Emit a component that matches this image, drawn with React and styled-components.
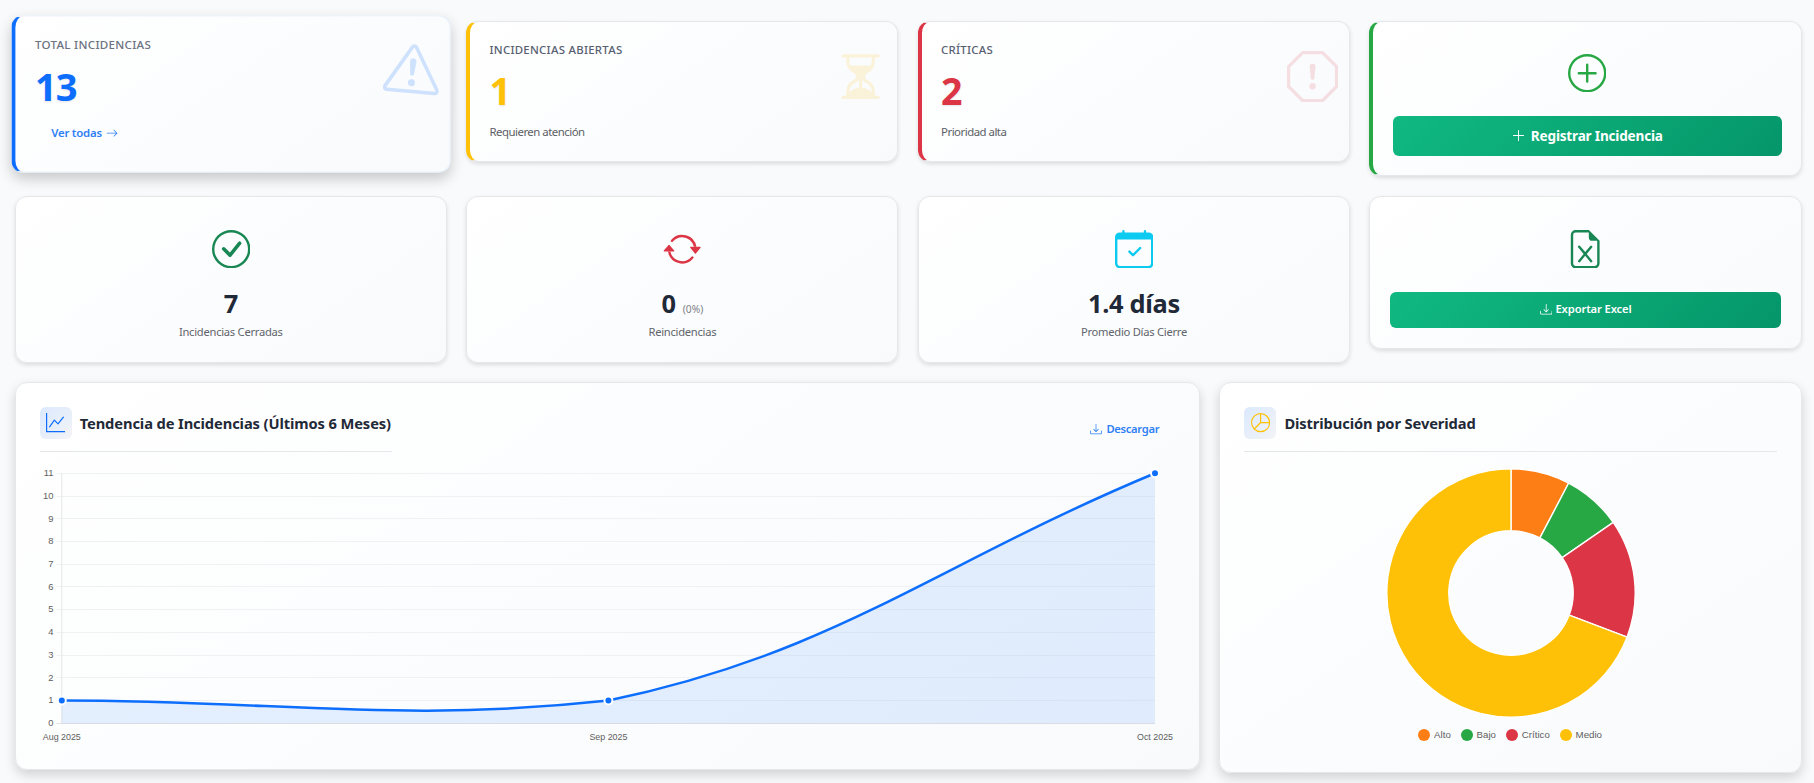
import React from "react";
import styled, { createGlobalStyle, css } from "styled-components";
import {
  BsArrowRepeat,
  BsArrowRight,
  BsCalendarCheck,
  BsCheckCircle,
  BsDownload,
  BsExclamationOctagon,
  BsExclamationTriangle,
  BsFileEarmarkExcel,
  BsGraphUp,
  BsHourglassSplit,
  BsPieChart,
  BsPlusCircle,
  BsPlusLg,
} from "react-icons/bs";

const GlobalStyle = createGlobalStyle`
  *, *::before, *::after { box-sizing: border-box; }
  body {
    margin: 0;
    min-height: 100vh;
    background: #f8fafc;
    color: #1f2937;
    font-family: "Segoe UI", "Noto Sans", sans-serif;
    overflow: hidden;
  }
  svg { display: block; flex: none; }
`;

const Dashboard = styled.main`
  display: flex;
  flex-direction: column;
  width: 1787px;
  margin: 21px 0 0 14.7px;
`;

const CardRow = styled.section`
  display: grid;
  grid-template-columns: repeat(4, 1fr);
  gap: 19.4px;
  align-items: start;
  height: ${(p) => p.$height}px;
`;

const ChartRow = styled.section`
  display: grid;
  grid-template-columns: 1185.1px 1fr;
  gap: 19.6px;
  align-items: start;
`;

const Surface = styled.article`
  border: 1px solid #e5e7eb;
  border-radius: 12px;
  background: linear-gradient(145deg, #ffffff 0%, #f8fafc 100%);
  box-shadow: 0 2px 4px rgba(0, 0, 0, 0.12);
`;

const KpiCard = styled(Surface)`
  position: relative;
  height: ${(p) => p.$height}px;
  padding: 19.2px;
  border-left: 4px solid ${(p) => p.$accent};
  ${(p) =>
    p.$raised &&
    css`
      transform: translate(0, -4.5px) scale(1.017);
      border-top-color: #e6effd;
      border-right-color: #e6effd;
      border-bottom-color: #dfe8f6;
      box-shadow: 0 6px 14px rgba(0, 0, 0, 0.2);
    `}
`;

const KpiLabel = styled.h6`
  margin: 0;
  color: ${(p) => (p.$soft ? "#6b7280" : "#566070")};
  font-size: 11.4px;
  font-weight: 500;
  line-height: 17px;
  letter-spacing: 0.28px;
  text-transform: uppercase;
`;

const KpiValue = styled.div`
  margin-top: 7px;
  color: ${(p) => p.$color};
  font-size: 37.5px;
  font-weight: 700;
  line-height: 52px;
  letter-spacing: -1px;
  text-shadow: 0 1px 2px rgba(0, 0, 0, 0.1);
`;

const KpiNote = styled.div`
  margin-top: 6px;
  color: #5b6066;
  font-size: 11.4px;
  font-weight: 400;
  line-height: 17px;
  letter-spacing: -0.5px;
`;

const TextLink = styled.a`
  display: inline-flex;
  align-items: center;
  gap: 4px;
  color: #2f80f5;
  font-size: 11.2px;
  font-weight: 600;
  line-height: 16px;
  letter-spacing: -0.2px;
`;

const KpiLink = styled(TextLink)`
  margin: 12px 0 0 16px;
`;

const KpiIcon = styled.span`
  position: absolute;
  top: ${(p) => (p.$tilted ? 26 : 29)}px;
  right: 11.4px;
  color: ${(p) => p.$color};
  opacity: ${(p) => (p.$tilted ? 0.18 : 0.14)};
  transform: ${(p) => (p.$tilted ? "rotate(5deg) scale(1.08)" : "none")};
`;

const ActionBody = styled.div`
  display: flex;
  flex-direction: column;
  align-items: center;
  gap: 24px;
  padding-top: 12.4px;
`;

const Tint = styled.span`
  color: ${(p) => p.$color};
`;

const PrimaryButton = styled.button`
  display: flex;
  align-items: center;
  justify-content: center;
  gap: ${(p) => (p.$large ? 4.5 : 3.5)}px;
  width: 100%;
  height: ${(p) => (p.$large ? 40 : 36)}px;
  padding: ${(p) => (p.$large ? 0 : "0 0 2px")};
  border: 0;
  border-radius: 6px;
  background: linear-gradient(135deg, #10b981 0%, #059669 100%);
  color: #fff;
  font-family: inherit;
  font-size: ${(p) => (p.$large ? 13.6 : 11.2)}px;
  font-weight: ${(p) => (p.$large ? 700 : 600)};
  letter-spacing: ${(p) => (p.$large ? -0.2 : -0.12)}px;
`;

const StatCard = styled(Surface)`
  display: flex;
  flex-direction: column;
  align-items: center;
  height: ${(p) => p.$height}px;
  padding: 33px 20px 20px;
`;

const StatValue = styled.div`
  display: flex;
  align-items: baseline;
  gap: 7px;
  height: 36px;
  margin-top: 17px;
  color: #1f2937;
  font-size: 25.4px;
  font-weight: 700;
  line-height: 36px;
  letter-spacing: -0.3px;
`;

const StatShare = styled.small`
  color: #7b8087;
  font-size: 10.2px;
  font-weight: 400;
  line-height: 1;
  letter-spacing: 0;
`;

const StatLabel = styled.div`
  margin-top: 2px;
  color: #5f646b;
  font-size: 11.2px;
  line-height: 18px;
  letter-spacing: -0.27px;
`;

const ExportButton = styled(PrimaryButton)`
  margin-top: 23.6px;
`;

const Panel = styled(Surface)`
  height: ${(p) => p.$height}px;
  padding: 24px;
  box-shadow: 0 5px 12px rgba(0, 0, 0, 0.16);
`;

const PanelHeader = styled.header`
  display: flex;
  align-items: flex-start;
  justify-content: space-between;
  height: 57px;
`;

const PanelTitle = styled.h5`
  display: flex;
  align-items: flex-start;
  gap: 8px;
  width: ${(p) => (p.$wide ? "100%" : "352px")};
  height: 45px;
  margin: 0;
  border-bottom: 1px solid #e5e7eb;
  font-size: 14.7px;
  font-weight: 700;
  line-height: 33px;
  letter-spacing: -0.11px;
  white-space: nowrap;
`;

const TitleIcon = styled.span`
  display: grid;
  place-items: center;
  width: 32px;
  height: 32px;
  border-radius: 6px;
  background: linear-gradient(135deg, #dbe9fe 0%, #f3f4f6 100%);
  color: ${(p) => p.$color};
`;

const DownloadLink = styled(TextLink)`
  margin: 14px 15.5px 0 0;
  letter-spacing: -0.3px;
`;

const AxisText = styled.text`
  fill: #606060;
  font-family: "Liberation Sans", Arial, sans-serif;
  font-size: ${(p) => p.$size}px;
`;

const PieWrap = styled.div`
  display: flex;
  flex-direction: column;
  align-items: center;
  gap: 10px;
  padding-top: 4px;
`;

const Legend = styled.ul`
  display: flex;
  gap: 9.8px;
  margin: 0 1px 0 0;
  padding: 0;
  list-style: none;
`;

const LegendItem = styled.li`
  display: flex;
  align-items: center;
  gap: 4px;
  color: #606060;
  font-family: "Liberation Sans", Arial, sans-serif;
  font-size: 9.7px;
  line-height: 14px;

  &::before {
    content: "";
    width: 12px;
    height: 12px;
    border-radius: 50%;
    background: ${(p) => p.$color};
  }
`;

const severities = [
  { name: "Alto", count: 1, color: "#fd7e14" },
  { name: "Bajo", count: 1, color: "#28a745" },
  { name: "Crítico", count: 2, color: "#dc3545" },
  { name: "Medio", count: 9, color: "#ffc107" },
];

const AXIS_LEFT = 21.8;
const AXIS_RIGHT = 1115;
const AXIS_BOTTOM = 259.3;
const STEP = 22.73;
const yOf = (value) => AXIS_BOTTOM - value * STEP;
const crisp = (y) => Math.floor(y) + 0.5;

function TrendChart() {
  const mid = (AXIS_LEFT + AXIS_RIGHT) / 2;
  const curve = [
    `M${AXIS_LEFT} ${yOf(1)}`,
    `C240.4 ${yOf(1)} 358.5 ${AXIS_BOTTOM} ${mid} ${yOf(1)}`,
    `C795.8 ${yOf(3.08)} 896.4 ${yOf(7)} ${AXIS_RIGHT} ${yOf(11)}`,
  ].join(" ");
  const points = [
    { x: AXIS_LEFT, value: 1, label: "Aug 2025" },
    { x: mid, value: 1, label: "Sep 2025" },
    { x: AXIS_RIGHT, value: 11, label: "Oct 2025" },
  ];
  return (
    <svg width="1135" height="290" viewBox="0 0 1135 290" overflow="visible">
      {Array.from({ length: 12 }, (_, v) => (
        <g key={v}>
          <path
            d={`M16.5 ${crisp(yOf(v))}H${AXIS_RIGHT}`}
            stroke={v === 0 ? "#dfe1e3" : "#f0f1f2"}
          />
          <AxisText $size={9.4} x="13.4" y={yOf(v) + 2.8} textAnchor="end">
            {v}
          </AxisText>
        </g>
      ))}
      <path
        d={`M${AXIS_LEFT} ${yOf(11)}V${AXIS_BOTTOM}`}
        stroke="#e5e6e7"
      />
      <path
        d={`${curve} V${AXIS_BOTTOM} H${AXIS_LEFT}Z`}
        fill="#0d6efd"
        fillOpacity="0.1"
      />
      <path d={curve} fill="none" stroke="#0d6efd" strokeWidth="2.5" />
      {points.map((p) => (
        <g key={p.label}>
          <circle
            cx={p.x}
            cy={yOf(p.value)}
            r="4"
            fill="#0d6efd"
            stroke="#fff"
            strokeWidth="2"
          />
          <AxisText $size={8.9} x={p.x} y="276" textAnchor="middle">
            {p.label}
          </AxisText>
        </g>
      ))}
    </svg>
  );
}

function SeverityChart() {
  const total = severities.reduce((sum, s) => sum + s.count, 0);
  const outer = 124.2;
  const inner = 62.2;
  const at = (r, turn) => {
    const a = turn * 2 * Math.PI - Math.PI / 2;
    return `${(r * Math.cos(a)).toFixed(2)} ${(r * Math.sin(a)).toFixed(2)}`;
  };
  let start = 0;
  return (
    <PieWrap>
      <svg width="250" height="250" viewBox="-125 -125 250 250">
        {severities.map((s) => {
          const from = start / total;
          start += s.count;
          const to = start / total;
          const large = to - from > 0.5 ? 1 : 0;
          return (
            <path
              key={s.name}
              d={`M${at(outer, from)}A${outer} ${outer} 0 ${large} 1 ${at(outer, to)}L${at(inner, to)}A${inner} ${inner} 0 ${large} 0 ${at(inner, from)}Z`}
              fill={s.color}
              stroke="#fff"
              strokeWidth="1.4"
            />
          );
        })}
      </svg>
      <Legend>
        {severities.map((s) => (
          <LegendItem key={s.name} $color={s.color}>
            {s.name}
          </LegendItem>
        ))}
      </Legend>
    </PieWrap>
  );
}

export default function App() {
  return (
    <>
      <GlobalStyle />
      <Dashboard>
        <CardRow $height={175}>
          <KpiCard $height={155} $accent="#0d6efd" $raised>
            <KpiLabel $soft>Total Incidencias</KpiLabel>
            <KpiValue $color="#0d6efd">13</KpiValue>
            <KpiLink>
              Ver todas <BsArrowRight size={12} />
            </KpiLink>
            <KpiIcon $color="#0d6efd" $tilted>
              <BsExclamationTriangle size={51.2} />
            </KpiIcon>
          </KpiCard>
          <KpiCard $height={141} $accent="#ffc107">
            <KpiLabel>Incidencias Abiertas</KpiLabel>
            <KpiValue $color="#ffc107">1</KpiValue>
            <KpiNote>Requieren atención</KpiNote>
            <KpiIcon $color="#ffc107">
              <BsHourglassSplit size={51.2} />
            </KpiIcon>
          </KpiCard>
          <KpiCard $height={141} $accent="#dc3545">
            <KpiLabel>Críticas</KpiLabel>
            <KpiValue $color="#dc3545">2</KpiValue>
            <KpiNote>Prioridad alta</KpiNote>
            <KpiIcon $color="#dc3545">
              <BsExclamationOctagon size={51.2} />
            </KpiIcon>
          </KpiCard>
          <KpiCard $height={155} $accent="#28a745">
            <ActionBody>
              <Tint $color="#28a745">
                <BsPlusCircle size={38.4} />
              </Tint>
              <PrimaryButton $large>
                <BsPlusLg size={15} />
                Registrar Incidencia
              </PrimaryButton>
            </ActionBody>
          </KpiCard>
        </CardRow>

        <CardRow $height={186}>
          <StatCard $height={167}>
            <Tint $color="#198754">
              <BsCheckCircle size={38.4} />
            </Tint>
            <StatValue>7</StatValue>
            <StatLabel>Incidencias Cerradas</StatLabel>
          </StatCard>
          <StatCard $height={167}>
            <Tint $color="#dc3545">
              <BsArrowRepeat size={38.4} />
            </Tint>
            <StatValue>
              0 <StatShare>(0%)</StatShare>
            </StatValue>
            <StatLabel>Reincidencias</StatLabel>
          </StatCard>
          <StatCard $height={167}>
            <Tint $color="#0dcaf0">
              <BsCalendarCheck size={38.4} />
            </Tint>
            <StatValue>1.4 días</StatValue>
            <StatLabel>Promedio Días Cierre</StatLabel>
          </StatCard>
          <StatCard $height={153}>
            <Tint $color="#198754">
              <BsFileEarmarkExcel size={38.4} />
            </Tint>
            <ExportButton>
              <BsDownload size={12.4} />
              Exportar Excel
            </ExportButton>
          </StatCard>
        </CardRow>

        <ChartRow>
          <Panel $height={388}>
            <PanelHeader>
              <PanelTitle>
                <TitleIcon $color="#0d6efd">
                  <BsGraphUp size={19.2} />
                </TitleIcon>
                Tendencia de Incidencias (Últimos 6 Meses)
              </PanelTitle>
              <DownloadLink>
                <BsDownload size={12} /> Descargar
              </DownloadLink>
            </PanelHeader>
            <TrendChart />
          </Panel>
          <Panel $height={391}>
            <PanelHeader>
              <PanelTitle $wide>
                <TitleIcon $color="#ffc107">
                  <BsPieChart size={19.2} />
                </TitleIcon>
                Distribución por Severidad
              </PanelTitle>
            </PanelHeader>
            <SeverityChart />
          </Panel>
        </ChartRow>
      </Dashboard>
    </>
  );
}
